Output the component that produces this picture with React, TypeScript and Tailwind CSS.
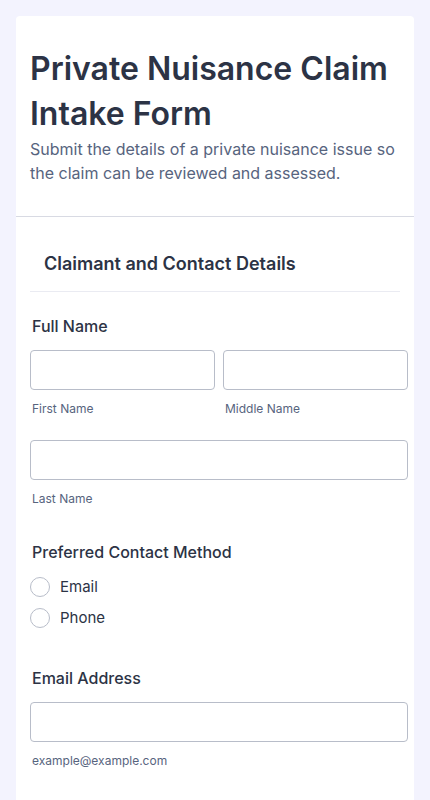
import React from "react";

const SubLabel = ({ children }: { children: React.ReactNode }) => (
  <span className="block mt-[12px] pl-[2px] text-[12px] leading-[14px] text-[#57647e]">{children}</span>
);

const TextBox = ({ className = "" }: { className?: string }) => (
  <input
    type="text"
    className={`block w-full h-[40px] rounded-[4px] border border-[#b8bdc9] bg-white px-3 text-[15px] text-[#2c3345] outline-none ${className}`}
  />
);

export default function App() {
  return (
    <div className="min-h-[800px] bg-[#f3f3fe] pt-[16px] px-[16px] font-['Inter',sans-serif]">
      <div className="bg-white rounded-t-[4px] overflow-visible">
        <header className="px-[14px] pt-[30px] pb-[31px] border-b border-[#d8dae3]">
          <h1 className="text-[32px] leading-[45px] font-semibold text-[#2c3345]">
            Private Nuisance Claim Intake Form
          </h1>
          <p className="mt-[1px] text-[16px] leading-[24px] text-[#57647e]">
            Submit the details of a private nuisance issue so the claim can be reviewed and assessed.
          </p>
        </header>

        <div className="pl-[14px] pr-[6px] pt-[35px] pb-[40px]">
          <div className="mr-[8px] border-b border-[#eaebf2] pl-[14px] pb-[15px]">
            <h2 className="text-[18px] leading-[24px] font-semibold text-[#2c3345]">
              Claimant and Contact Details
            </h2>
          </div>

          <div className="mt-[23px]">
            <label className="block pl-[2px] text-[16px] leading-[22px] font-medium text-[#2c3345]">Full Name</label>
            <div className="mt-[13px] grid grid-cols-2 gap-[8px]">
              <div>
                <TextBox />
                <SubLabel>First Name</SubLabel>
              </div>
              <div>
                <TextBox />
                <SubLabel>Middle Name</SubLabel>
              </div>
            </div>
            <div className="mt-[24px]">
              <TextBox />
              <SubLabel>Last Name</SubLabel>
            </div>
          </div>

          <div className="mt-[35px]">
            <label className="block pl-[2px] text-[16px] leading-[22px] font-medium text-[#2c3345]">
              Preferred Contact Method
            </label>
            <div className="mt-[14px] flex flex-col gap-[11px]">
              {["Email", "Phone"].map((opt) => (
                <label key={opt} className="flex items-center gap-[10px]">
                  <span className="block w-[20px] h-[20px] rounded-full border border-[#b8bdc9] bg-white" />
                  <span className="text-[15px] leading-[20px] text-[#2c3345]">{opt}</span>
                </label>
              ))}
            </div>
          </div>

          <div className="mt-[39px]">
            <label className="block pl-[2px] text-[16px] leading-[22px] font-medium text-[#2c3345]">Email Address</label>
            <div className="mt-[13px]">
              <TextBox />
              <SubLabel>example@example.com</SubLabel>
            </div>
          </div>
        </div>
      </div>
    </div>
  );
}
